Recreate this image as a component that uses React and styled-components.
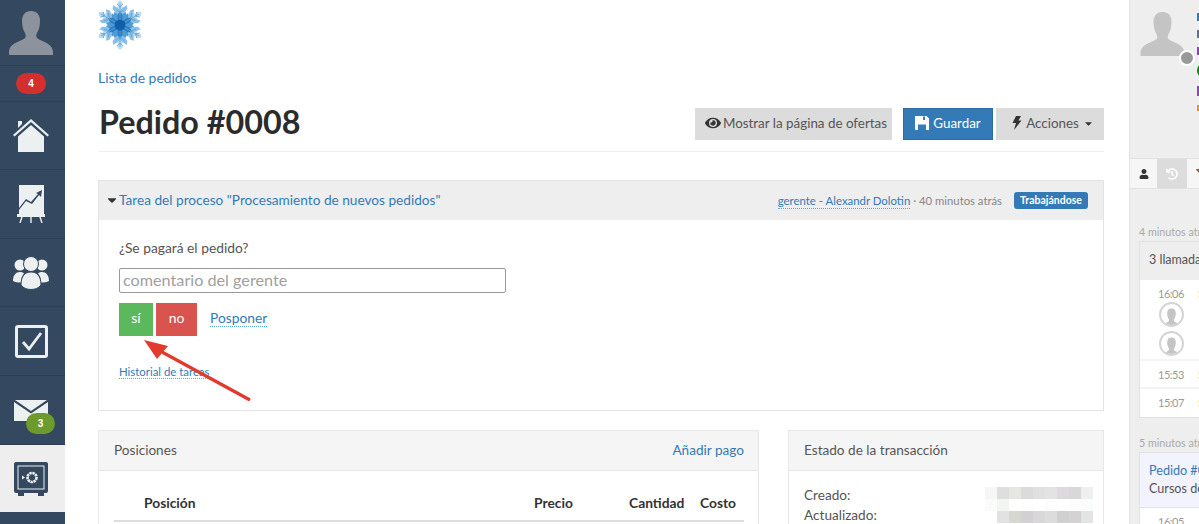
import React from "react";
import styled, { createGlobalStyle } from "styled-components";
import { FaEye, FaCaretDown, FaUser, FaHistory, FaFilter } from "react-icons/fa";

const GlobalStyle = createGlobalStyle`
  html, body {
    margin: 0;
    padding: 0;
    height: 100%;
    overflow: hidden;
    background: #fff;
  }
  * { box-sizing: border-box; }
  body {
    font-family: "Lato", "Liberation Sans", sans-serif;
    font-size: 13.600px;
    color: #555;
  }
`;

const blurRows = [
  ["#f6f6f6", "#dedede", "#e6e6e2", "#dcdadc", "#e0e0e0", "#e2e4e2", "#dcdadc", "#d8d8d8", "#eef0f0"],
  ["#fbfbfb", "#f3f5f3", "#ffffff", "#fdfdfd", "#ffffff", "#fdfdfd", "#ffffff", "#fdfdfd", "#fbfdfd"],
  ["#ffffff", "#e2e2e2", "#d6d8d0", "#d2d0d2", "#d8d8d8", "#dcdcdc", "#d0d0d0", "#d4d2d2", "#e2e4e6"],
];

function Silhouette({ color }) {
  return (
    <svg width="100%" height="100%" viewBox="0 0 44 44">
      <path
        fill={color}
        d="M22 0c6 0 9 4 9 10 0 5-1 9-3 12-1 2-1 4 0 5 3 3 16 5 16 14v3H0v-3c0-9 13-11 16-14 1-1 1-3 0-5-2-3-3-7-3-12 0-6 3-10 9-10z"
      />
    </svg>
  );
}

function Snowflake() {
  const arms = [0, 60, 120, 180, 240, 300];
  return (
    <svg width="44" height="50" viewBox="-22 -25 44 50">
      {arms.map((a) => (
        <g key={a} transform={`rotate(${a})`}>
          <path d="M0 -25 3 -22 1.500 -19 4 -17 0 -8-4 -17-1.500 -19-3 -22z" fill="#bcdcf2" />
          <path d="M0 -15-6.500 -20-7.500 -16.500-4 -11 0 -9 4 -11 7.500 -16.500 6.500 -20z" fill="#8cc0e6" />
          <path d="M0 -9-6 -13-6 -9-3 -5 0 -4 3 -5 6 -9 6 -13z" fill="#4f9bd4" />
          <path d="M-2.500 -10 0 -14 2.500 -10 2 -3 -2 -3z" fill="#2b7fc2" />
          <path d="M0 -3V-22M0 -12-4.500 -16M0 -12 4.500 -16M0 -18-3 -21M0 -18 3 -21" stroke="#5aa3d9" strokeWidth=".8" fill="none" />
        </g>
      ))}
      <circle r="5.500" fill="#0f5fa8" />
    </svg>
  );
}

function HomeIcon() {
  return (
    <svg width="36" height="34" viewBox="0 0 36 34" fill="#ecf0f1">
      <path d="M5 2h4v3L5 9z" />
      <path d="M18 0 36 16l-1.500 1.500L18 3 1.500 17.500 0 16z" />
      <path d="M18 6 31 17.500V33H5V17.500z" />
    </svg>
  );
}

function ChartIcon() {
  return (
    <svg width="28" height="38" viewBox="0 0 28 38">
      <path d="M2 0h25v29H2z" fill="#ecf0f1" />
      <path d="M2 23 9 14l5 3 7-8-2-1 6-3-1 7-2-2-7 9-6-3-7 9z" fill="#34485f" />
      <path d="M0 29h28v3H0z" fill="#ecf0f1" />
      <path d="M5 32 3 38M14 32v6M23 32l2 6" stroke="#ecf0f1" strokeWidth="1.400" />
    </svg>
  );
}

function UsersIcon() {
  return (
    <svg width="36" height="34" viewBox="0 0 36 34" fill="#ecf0f1">
      <circle cx="7" cy="9" r="5.500" />
      <circle cx="29" cy="9" r="5.500" />
      <path d="M0 25c0-6 3-9 7-9 2 0 3 .5 4 1.500-2 2-3 5-3 9-3 0-6-.5-8-1.500zM36 25c0-6-3-9-7-9-2 0-3 .5-4 1.500 2 2 3 5 3 9 3 0 6-.5 8-1.500z" />
      <circle cx="18" cy="8" r="7.500" stroke="#34485f" strokeWidth="1" />
      <path d="M8 29c0-9 4-13 10-13s10 4 10 13c-2 3-6 4.500-10 4.500S10 32 8 29z" stroke="#34485f" strokeWidth="1" />
    </svg>
  );
}

function CheckIcon() {
  return (
    <svg width="33" height="33" viewBox="0 0 33 33">
      <rect x="1.500" y="1.500" width="30" height="30" rx="1.500" fill="none" stroke="#ecf0f1" strokeWidth="3" />
      <path d="M8 17 14 24 26 8" fill="none" stroke="#ecf0f1" strokeWidth="2.800" />
    </svg>
  );
}

function MailIcon() {
  return (
    <svg width="34" height="21" viewBox="0 0 34 21" fill="#ecf0f1">
      <path d="M1 0h32L17 11z" />
      <path d="M0 2v19h34V2L17 13.500z" />
    </svg>
  );
}

function SafeIcon() {
  return (
    <svg width="34" height="34" viewBox="0 0 34 34">
      <rect x="0" y="0" width="34" height="31" rx="2" fill="#34485f" />
      <path d="M4 31h6v3H4zM24 31h6v3h-6z" fill="#34485f" />
      <rect x="4" y="4" width="26" height="23" fill="none" stroke="#ecf0f1" strokeWidth="1" />
      <circle cx="18" cy="15.500" r="4.500" fill="none" stroke="#ecf0f1" strokeWidth="2.600" strokeDasharray="2.400 .6" />
      <path d="M8 13.500v4l3-2z" fill="#ecf0f1" />
    </svg>
  );
}

function FloppyIcon() {
  return (
    <svg width="14" height="14" viewBox="0 0 14 14" fill="#fff">
      <path
        fillRule="evenodd"
        d="M0 0h11.500L14 2.500V14H0zM3 8.500V14h8V8.500zM8 .5V4h2V.5z"
      />
    </svg>
  );
}

function BoltIcon() {
  return (
    <svg width="10" height="14" viewBox="0 0 10 14" fill="#333">
      <path d="M4 0h5L6.500 4.500H9.500L2 14 4 7H.5z" />
    </svg>
  );
}

function App() {
  return (
    <>
      <GlobalStyle />
      <Page>
        <NavBar>
          <NavItem $h={66}>
            <AvatarBox>
              <Silhouette color="#8c939d" />
            </AvatarBox>
          </NavItem>
          <NavItem $h={36}>
            <Pill $bg="#d32f2f">4</Pill>
          </NavItem>
          <NavItem $h={68}><HomeIcon /></NavItem>
          <NavItem $h={69}><ChartIcon /></NavItem>
          <NavItem $h={68}><UsersIcon /></NavItem>
          <NavItem $h={69}><CheckIcon /></NavItem>
          <NavItem $h={69}>
            <MailIcon />
            <MailBadge>3</MailBadge>
          </NavItem>
          <NavItem $h={67} $active><SafeIcon /></NavItem>
        </NavBar>

        <Main>
          <LogoRow><Snowflake /></LogoRow>
          <Crumb>Lista de pedidos</Crumb>
          <TitleRow>
            <Title>Pedido #0008</Title>
            <ButtonGroup>
              <ActionButton $w={197} $shift={5}><FaEye size={16} color="#333" /> Mostrar la página de ofertas</ActionButton>
              <ActionButton $w={90} $primary $gap={4}><FloppyIcon /> Guardar</ActionButton>
              <ActionButton $w={108} $gap={4} $shift={6}><BoltIcon /> Acciones <FaCaretDown size={11} color="#333" /></ActionButton>
            </ButtonGroup>
          </TitleRow>

          <TaskPanel>
            <TaskHeader>
              <TaskTitle>
                <FaCaretDown size={14} color="#333" />
                <BlueText>Tarea del proceso "Procesamiento de nuevos pedidos"</BlueText>
              </TaskTitle>
              <TaskMeta>
                <DottedLink $small>gerente - Alexandr Dolotin</DottedLink>
                <MetaText>· 40 minutos atrás</MetaText>
                <StatusBadge>Trabajándose</StatusBadge>
              </TaskMeta>
            </TaskHeader>
            <TaskBody>
              <Question>¿Se pagará el pedido?</Question>
              <CommentInput placeholder="comentario del gerente" />
              <AnswerRow>
                <AnswerButton $bg="#5cb85c" $w={34}>sí</AnswerButton>
                <AnswerButton $bg="#d9534f" $w={41}>no</AnswerButton>
                <PostponeLink>Posponer</PostponeLink>
              </AnswerRow>
              <HistoryRow>
                <DottedLink $small>Historial de tareas</DottedLink>
              </HistoryRow>
            </TaskBody>
            <ArrowMark width="120" height="72" viewBox="0 0 120 72">
              <path d="M24 17 112 65" stroke="#e23b2e" strokeWidth="3.200" fill="none" />
              <path d="M6 5 30 11 19 24z" fill="#e23b2e" />
            </ArrowMark>
          </TaskPanel>

          <BottomRow>
            <Card $w={661}>
              <CardHeader>
                <span>Posiciones</span>
                <BlueText>Añadir pago</BlueText>
              </CardHeader>
              <TableHead>
                <HeadCell $w={420} $pad={30}>Posición</HeadCell>
                <HeadCell $w={95}>Precio</HeadCell>
                <HeadCell $w={71}>Cantidad</HeadCell>
                <HeadCell $w={44}>Costo</HeadCell>
              </TableHead>
            </Card>
            <Card $w={316}>
              <CardHeader>
                <span>Estado de la transacción</span>
              </CardHeader>
              <StateBody>
                <StateLabels>
                  <span>Creado:</span>
                  <span>Actualizado:</span>
                </StateLabels>
                <BlurBlock>
                  {blurRows.map((row, i) => (
                    <BlurRow key={i}>
                      {row.map((c, j) => (
                        <BlurCell key={j} $c={c} />
                      ))}
                    </BlurRow>
                  ))}
                </BlurBlock>
              </StateBody>
            </Card>
          </BottomRow>
        </Main>

        <Activity>
          <ProfileRow>
            <ProfileAvatar>
              <Silhouette color="#c4c4c4" />
              <OnlineDot />
            </ProfileAvatar>
            <ProfileLinks>
              <Sliver $c="#2f7ab8" $h={8} />
              <Sliver $c="#5f7390" $h={8} />
              <Sliver $c="#8e44ad" $h={8} />
              <Sliver $c="#0a8a0a" $h={13} $round />
              <Sliver $c="#8e44ad" $h={10} />
              <Sliver $c="#e0952a" $h={6} />
            </ProfileLinks>
          </ProfileRow>
          <Tabs>
            <Tab $w={27}><FaUser size={10} color="#333" /></Tab>
            <Tab $w={30} $active><FaHistory size={12} color="#fff" /></Tab>
            <Tab $w={28}><FaFilter size={10} color="#8a5a2b" /></Tab>
          </Tabs>
          <FeedBlock>
            <TimeAgo>4 minutos atrás</TimeAgo>
            <FeedCard>
              <FeedHeader>3 llamadas</FeedHeader>
              <FeedRow $h={81}>
                <FeedTime>
                  16:06
                  <SmallAvatar><Silhouette color="#c4c4c4" /></SmallAvatar>
                  <SmallAvatar><Silhouette color="#c4c4c4" /></SmallAvatar>
                </FeedTime>
                <FeedContent>
                  <FeedMark $c="#f0ad4e">S</FeedMark>
                  <GreenTick />
                </FeedContent>
              </FeedRow>
              <FeedRow $h={28}>
                <FeedTime>15:53</FeedTime>
                <FeedContent><FeedMark $c="#f0ad4e">S</FeedMark></FeedContent>
              </FeedRow>
              <FeedRow $h={28} $last>
                <FeedTime>15:07</FeedTime>
                <FeedContent><FeedMark $c="#f0ad4e">S</FeedMark></FeedContent>
              </FeedRow>
            </FeedCard>
          </FeedBlock>
          <FeedBlock>
            <TimeAgo>5 minutos atrás</TimeAgo>
            <FeedCard>
              <OrderHeader>
                <BlueText>Pedido #0008</BlueText>
                <span>Cursos de inglés</span>
              </OrderHeader>
              <FeedRow $h={28} $last>
                <FeedTime>16:05</FeedTime>
              </FeedRow>
            </FeedCard>
          </FeedBlock>
        </Activity>
      </Page>
    </>
  );
}

export default App;

const Page = styled.div`
  display: flex;
  width: 1199px;
  height: 524px;
  overflow: hidden;
`;

const NavBar = styled.div`
  flex: none;
  width: 65px;
  height: 524px;
  background: #34485f;
  display: flex;
  flex-direction: column;
`;

const NavItem = styled.div`
  position: relative;
  flex: none;
  height: ${(p) => p.$h}px;
  padding-right: 3px;
  display: flex;
  align-items: center;
  justify-content: center;
  background: ${(p) => (p.$active ? "#eeeeee" : "transparent")};
  border-bottom: ${(p) => (p.$active ? "none" : "1px solid #2d3f54")};
`;

const AvatarBox = styled.div`
  width: 44px;
  height: 44px;
`;

const Pill = styled.div`
  width: 30px;
  height: 21px;
  border-radius: 11px;
  background: ${(p) => p.$bg};
  color: #fff;
  font: 700 10px "Liberation Sans", sans-serif;
  line-height: 21px;
  text-align: center;
`;

const MailBadge = styled(Pill)`
  position: absolute;
  left: 26px;
  top: 37px;
  width: 29px;
  background: #6c9a2e;
`;

const Main = styled.div`
  flex: none;
  width: 1064px;
  padding: 0 25px 0 33px;
  background: #fff;
`;

const LogoRow = styled.div`
  height: 69px;
`;

const Crumb = styled.div`
  height: 19px;
  line-height: 17px;
  color: #337ab7;
  font-size: 13.900px;
`;

const TitleRow = styled.div`
  display: flex;
  justify-content: space-between;
  align-items: flex-start;
  height: 64px;
  padding-top: 20px;
  border-bottom: 1px solid #eeeeee;
`;

const Title = styled.h1`
  margin: -2px 0 0 1px;
  font-size: 32.300px;
  font-weight: 700;
  line-height: 32px;
  color: #2b2b2b;
`;

const ButtonGroup = styled.div`
  display: flex;
  justify-content: flex-end;
  gap: 3px;
`;

const ActionButton = styled.div`
  width: ${(p) => p.$w}px;
  height: 32px;
  margin-left: ${(p) => (p.$primary ? "8px" : "0")};
  padding: 0 0 2px ${(p) => p.$shift || 0}px;
  display: flex;
  align-items: center;
  justify-content: center;
  gap: ${(p) => p.$gap || 2}px;
  background: ${(p) => (p.$primary ? "#337ab7" : "#dcdcdc")};
  border: 1px solid ${(p) => (p.$primary ? "#2e6da4" : "#dcdcdc")};
  color: ${(p) => (p.$primary ? "#fff" : "#555")};
  font-size: 13.400px;
  white-space: nowrap;
`;

const TaskPanel = styled.div`
  position: relative;
  margin-top: 28px;
  height: 231px;
  border: 1px solid #e4e4e4;
`;

const TaskHeader = styled.div`
  height: 39px;
  padding: 0 15px 0 6px;
  background: #eeeeee;
  display: flex;
  align-items: center;
  justify-content: space-between;
`;

const TaskTitle = styled.div`
  display: flex;
  align-items: center;
  padding-bottom: 2px;
  font-size: 13.650px;
`;

const BlueText = styled.span`
  color: #337ab7;
`;

const TaskMeta = styled.div`
  display: flex;
  align-items: center;
`;

const DottedLink = styled.span`
  color: #337ab7;
  font-size: ${(p) => (p.$small ? "11.400px" : "13.800px")};
  border-bottom: 1px dotted #5aa5dc;
  line-height: 15px;
`;

const MetaText = styled.span`
  margin-left: 3px;
  color: #888;
  font-size: 11.300px;
`;

const StatusBadge = styled.span`
  margin-left: 12px;
  width: 74px;
  height: 17px;
  border-radius: 3px;
  background: #337ab7;
  color: #fff;
  font-size: 10.500px;
  font-weight: 700;
  line-height: 17px;
  text-align: center;
`;

const TaskBody = styled.div`
  padding: 20px 20px 0;
`;

const Question = styled.div`
  height: 20px;
  line-height: 15px;
  color: #555;
  font-size: 13.800px;
`;

const CommentInput = styled.input`
  display: block;
  margin-top: 8px;
  width: 387px;
  height: 25px;
  padding: 0 3px 2px;
  border: 1px solid #999;
  border-radius: 2px;
  font: 16.200px "Lato", "Liberation Sans", sans-serif;
  &::placeholder {
    color: #a0a0a0;
    opacity: 1;
  }
`;

const AnswerRow = styled.div`
  display: flex;
  align-items: center;
  margin-top: 10px;
  gap: 3px;
`;

const AnswerButton = styled.div`
  width: ${(p) => p.$w}px;
  height: 33px;
  line-height: 30px;
  text-align: center;
  background: ${(p) => p.$bg};
  color: #fff;
  font-size: 14px;
`;

const PostponeLink = styled(DottedLink)`
  margin: 0 0 3px 10px;
  line-height: 17px;
`;

const HistoryRow = styled.div`
  margin-top: 27px;
`;

const ArrowMark = styled.svg`
  position: absolute;
  left: 39px;
  top: 154px;
`;

const BottomRow = styled.div`
  display: flex;
  justify-content: space-between;
  margin-top: 19px;
`;

const Card = styled.div`
  width: ${(p) => p.$w}px;
  height: 120px;
  border: 1px solid #e8e8e8;
  border-bottom: none;
`;

const CardHeader = styled.div`
  height: 40px;
  padding: 0 14px 2px 15px;
  display: flex;
  align-items: center;
  justify-content: space-between;
  background: #f5f5f5;
  border-bottom: 1px solid #e6e6e6;
  color: #555;
`;

const TableHead = styled.div`
  display: flex;
  margin: 18px 14px 0 15px;
  height: 33px;
  border-bottom: 2px solid #dddddd;
`;

const HeadCell = styled.div`
  width: ${(p) => p.$w}px;
  padding-left: ${(p) => p.$pad || 0}px;
  font-size: 13.800px;
  font-weight: 700;
  color: #333;
  line-height: 28px;
`;

const StateBody = styled.div`
  display: flex;
  justify-content: space-between;
  padding: 15px 10px 0 15px;
`;

const StateLabels = styled.div`
  display: flex;
  flex-direction: column;
  gap: 2px;
  line-height: 18px;
  color: #555;
`;

const BlurBlock = styled.div`
  display: flex;
  flex-direction: column;
  margin-top: 1px;
`;

const BlurRow = styled.div`
  display: flex;
`;

const BlurCell = styled.div`
  width: 12px;
  height: 12px;
  background: ${(p) => p.$c};
`;

const Activity = styled.div`
  flex: none;
  width: 400px;
  height: 524px;
  background: #eeeeee;
  border-left: 1px solid #e2e2e2;
`;

const ProfileRow = styled.div`
  display: flex;
  height: 158px;
  padding: 12px 0 0 10px;
`;

const ProfileAvatar = styled.div`
  position: relative;
  flex: none;
  width: 45px;
  height: 44px;
`;

const OnlineDot = styled.div`
  position: absolute;
  left: 39px;
  top: 38px;
  width: 16px;
  height: 16px;
  border-radius: 50%;
  background: #999;
  border: 2px solid #fff;
`;

const ProfileLinks = styled.div`
  display: flex;
  flex-direction: column;
  gap: 9px;
  margin-left: 12px;
  padding-top: 1px;
`;

const Sliver = styled.div`
  width: 10px;
  height: ${(p) => p.$h}px;
  background: ${(p) => p.$c};
  border-radius: ${(p) => (p.$round ? "50%" : "0")};
`;

const Tabs = styled.div`
  display: flex;
  height: 31px;
  background: #f6f6f6;
  border-top: 1px solid #e2e2e2;
  border-bottom: 1px solid #e2e2e2;
`;

const Tab = styled.div`
  width: ${(p) => p.$w}px;
  display: flex;
  align-items: center;
  justify-content: center;
  background: ${(p) => (p.$active ? "#dcdcdc" : "transparent")};
`;

const FeedBlock = styled.div`
  padding: 36px 0 0 9px;
  & + & {
    padding-top: 18px;
  }
`;

const TimeAgo = styled.div`
  height: 16px;
  line-height: 14px;
  color: #aaa;
  font-size: 10.700px;
`;

const FeedCard = styled.div`
  width: 300px;
  background: #fff;
  border: 1px solid #e2e2e2;
`;

const FeedHeader = styled.div`
  height: 38px;
  line-height: 35px;
  padding-left: 9px;
  background: #eeeeee;
  color: #555;
  font-size: 12.500px;
`;

const OrderHeader = styled.div`
  height: 55px;
  padding: 9px 0 0 9px;
  background: #f3f3fd;
  border-bottom: 1px solid #e2e2e2;
  display: flex;
  flex-direction: column;
  line-height: 18px;
  font-size: 12.600px;
  color: #555;
`;

const FeedRow = styled.div`
  display: flex;
  gap: 8px;
  height: ${(p) => p.$h}px;
  padding-top: 7px;
  border-bottom: ${(p) => (p.$last ? "none" : "2px solid #f4f4f4")};
`;

const FeedTime = styled.div`
  width: 50px;
  padding-left: 12px;
  display: flex;
  flex-direction: column;
  align-items: center;
  color: #999;
  font-size: 11px;
  letter-spacing: -0.5px;
  line-height: 14px;
`;

const FeedContent = styled.div`
  display: flex;
  flex-direction: column;
  gap: 2px;
`;

const FeedMark = styled.span`
  color: ${(p) => p.$c};
  font-size: 12px;
  line-height: 14px;
`;

const GreenTick = styled.div`
  margin-left: 1px;
  width: 8px;
  height: 16px;
  background: #5cb85c;
`;

const SmallAvatar = styled.div`
  flex: none;
  width: 25px;
  height: 25px;
  margin-top: 1px;
  margin-bottom: 3px;
  padding-top: 3px;
  border-radius: 50%;
  border: 2px solid #d4d4d4;
  background: #fff;
  overflow: hidden;
  & svg {
    display: block;
    width: 21px;
    height: 24px;
  }
`;
